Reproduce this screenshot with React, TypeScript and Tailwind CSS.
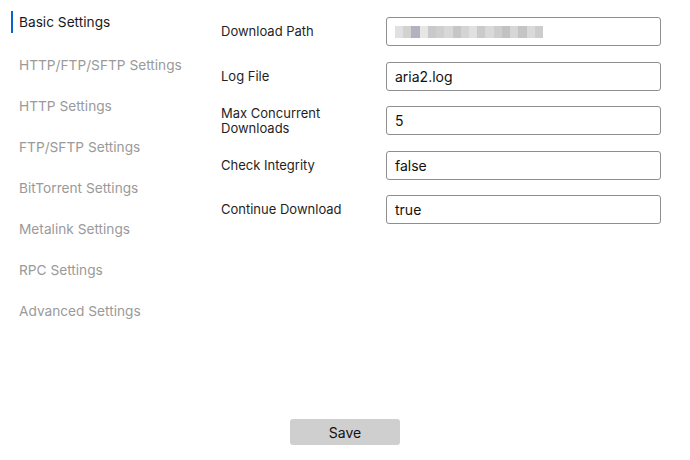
import React from "react";

const navItems = [
  "Basic Settings",
  "HTTP/FTP/SFTP Settings",
  "HTTP Settings",
  "FTP/SFTP Settings",
  "BitTorrent Settings",
  "Metalink Settings",
  "RPC Settings",
  "Advanced Settings",
];

const fields: { label: string; value?: string; blurred?: boolean }[] = [
  { label: "Download Path", blurred: true },
  { label: "Log File", value: "aria2.log" },
  { label: "Max Concurrent Downloads", value: "5" },
  { label: "Check Integrity", value: "false" },
  { label: "Continue Download", value: "true" },
];

const blurBlocks = [
  "#e0e0e0", "#d2d2d2", "#aeb3bf", "#e6e6e6", "#c9c9c9", "#cfcfcf", "#d8d8d8", "#c6c6c6",
  "#d4d4d4", "#e0e0e0", "#cacaca", "#d9d9d9", "#cdcdcd", "#c2c2c2", "#d6d6d6", "#c4c4c4",
  "#d9d9d9", "#cccccc",
];

function Blurred() {
  return (
    <div className="flex h-[12px] w-[148px]">
      {blurBlocks.map((c, i) => (
        <div key={i} className="h-full flex-1" style={{ background: c }} />
      ))}
    </div>
  );
}

export default function App() {
  return (
    <div
      className="relative h-[460px] w-[690px] overflow-hidden bg-white"
      style={{ fontFamily: "Inter, 'Liberation Sans', sans-serif" }}
    >
      <div className="flex">
        <nav className="w-[200px] shrink-0 pt-[11px]">
          {navItems.map((item, i) => (
            <div
              key={item}
              className={
                "relative flex h-[22px] items-center pl-[19px] text-[13.7px] " +
                (i === 0 ? "mb-[21px] text-[#1a1a1a]" : "mb-[19px] text-[#9a9a9a]")
              }
            >
              {i === 0 && <span className="absolute left-[11px] top-0 h-[22px] w-[2px] bg-[#0a64d0]" />}
              {item}
            </div>
          ))}
        </nav>
        <main className="flex flex-1 flex-col gap-[15.5px] pl-[21px] pr-[29px] pt-[17px]">
          {fields.map((f) => (
            <div key={f.label} className="flex h-[29px] items-center">
              <div className="w-[165px] pr-[25px] text-[13px] leading-[15px] text-[#1f1f1f]">{f.label}</div>
              <div className="flex h-[29px] flex-1 items-center rounded-[3px] border border-[#8e8e8e] pl-[8px] text-[14px] text-[#111]">
                {f.blurred ? <Blurred /> : f.value}
              </div>
            </div>
          ))}
        </main>
      </div>
      <div className="absolute bottom-[15px] left-0 right-0 flex justify-center">
        <button className="h-[26px] w-[110px] rounded-[3px] bg-[#cfcfcf] text-[14px] text-[#111]">Save</button>
      </div>
    </div>
  );
}
